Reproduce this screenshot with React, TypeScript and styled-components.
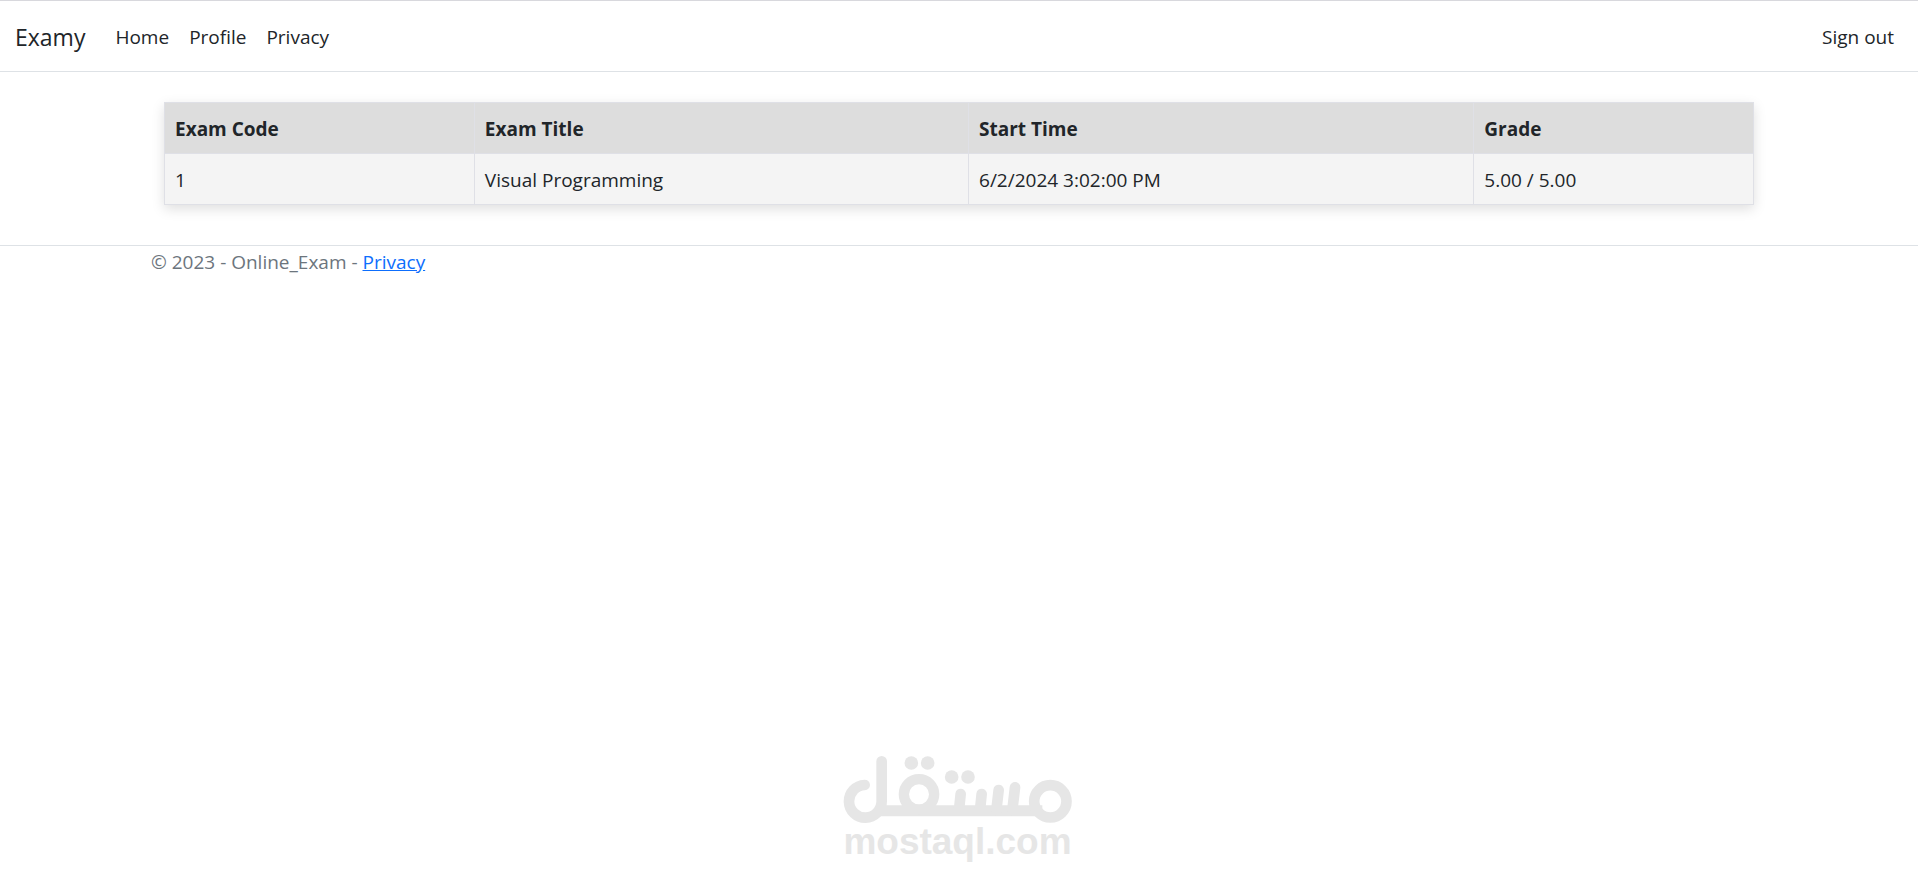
import React from "react";
import styled, { createGlobalStyle } from "styled-components";

const GlobalStyle = createGlobalStyle`
  *, *::before, *::after { box-sizing: border-box; }
  body {
    margin: 0;
    background: #fff;
    color: #212529;
    font-family: "Segoe UI", "Open Sans", "Noto Sans", sans-serif;
    font-size: 19px;
    line-height: 30px;
  }
`;

const Page = styled.div`
  display: flex;
  flex-direction: column;
  min-height: 100vh;
  border-top: 1px solid #d8d8dd;
`;

const Navbar = styled.nav`
  display: flex;
  align-items: center;
  height: 71px;
  padding: 2px 14px 0 15px;
  border-bottom: 1px solid #dee2e6;
`;

const Brand = styled.a`
  margin-right: 20px;
  color: #212529;
  font-size: 23px;
  text-decoration: none;
`;

const NavList = styled.ul<{ $end?: boolean }>`
  display: flex;
  margin: 0;
  margin-left: ${(p) => (p.$end ? "auto" : "0")};
  padding: 0;
  list-style: none;
`;

const NavLink = styled.a`
  display: block;
  padding: 10px;
  color: #212529;
  text-decoration: none;
`;

const Container = styled.div<{ $inset: number }>`
  width: 100%;
  max-width: 1650px;
  margin: 0 auto;
  padding: 0 ${(p) => p.$inset}px;
`;

const Main = styled.main`
  padding: 30px 0 40px;
`;

const ExamTable = styled.table`
  width: 100%;
  border-collapse: collapse;
  table-layout: fixed;
  background: #f4f4f4;
  box-shadow: 0 4px 12px rgba(0, 0, 0, 0.13);
`;

const Column = styled.col<{ $width: string }>`
  width: ${(p) => p.$width};
`;

const HeadCell = styled.th`
  padding: 11px 10px 9px;
  border: 1px solid #dfe0e6;
  background: #dddddd;
  font-weight: 700;
  text-align: left;
`;

const Cell = styled.td`
  padding: 11px 10px 9px;
  border: 1px solid #dfe0e6;
`;

const Footer = styled.footer`
  border-top: 1px solid #dee2e6;
  color: #6c757d;
  line-height: 32px;
`;

const FooterLink = styled.a`
  color: #0d6efd;
  text-decoration: underline;
`;

const Watermark = styled.div`
  display: flex;
  flex-direction: column;
  align-items: center;
  margin-top: auto;
  padding: 0 3px 17px 0;
  color: #e6e6e6;
`;

const WatermarkLogo = styled.svg`
  display: block;
  width: 229px;
  height: 67px;
`;

const WatermarkName = styled.span`
  font-family: "Liberation Sans", Arial, sans-serif;
  font-size: 37px;
  font-weight: 700;
  line-height: 38px;
`;

const columns = [
  { title: "Exam Code", width: "19.5%" },
  { title: "Exam Title", width: "31.1%" },
  { title: "Start Time", width: "31.8%" },
  { title: "Grade", width: "17.6%" },
];

const exams = [
  { code: "1", title: "Visual Programming", start: "6/2/2024 3:02:00 PM", grade: "5.00 / 5.00" },
];

export default function App() {
  return (
    <>
      <GlobalStyle />
      <Page>
        <header>
          <Navbar>
            <Brand href="#">Examy</Brand>
            <NavList>
              {["Home", "Profile", "Privacy"].map((label) => (
                <li key={label}>
                  <NavLink href="#">{label}</NavLink>
                </li>
              ))}
            </NavList>
            <NavList $end>
              <li>
                <NavLink href="#">Sign out</NavLink>
              </li>
            </NavList>
          </Navbar>
        </header>
        <Main>
          <Container $inset={30}>
            <ExamTable>
              <colgroup>
                {columns.map((c) => (
                  <Column key={c.title} $width={c.width} />
                ))}
              </colgroup>
              <thead>
                <tr>
                  {columns.map((c) => (
                    <HeadCell key={c.title} scope="col">{c.title}</HeadCell>
                  ))}
                </tr>
              </thead>
              <tbody>
                {exams.map((e) => (
                  <tr key={e.code}>
                    <Cell>{e.code}</Cell>
                    <Cell>{e.title}</Cell>
                    <Cell>{e.start}</Cell>
                    <Cell>{e.grade}</Cell>
                  </tr>
                ))}
              </tbody>
            </ExamTable>
          </Container>
        </Main>
        <Footer>
          <Container $inset={17}>
            © 2023 - Online_Exam - <FooterLink href="#">Privacy</FooterLink>
          </Container>
        </Footer>
        <Watermark>
          <WatermarkLogo viewBox="42 45 687 201" aria-hidden="true">
            <g fill="none" stroke="currentColor" strokeWidth="32" strokeLinecap="round">
              <path d="M107 132A49 49 0 1 0 158 181V61" />
              <path d="M150 209H640" strokeWidth="33" strokeLinecap="butt" />
              <circle cx="270" cy="160" r="45.5" strokeWidth="31" />
              <circle cx="664" cy="181" r="48.5" />
              <path d="M395 159L390 208M458 159L453 208M509 147L502 208M558 139L550 208" />
            </g>
            <g fill="currentColor">
              <circle cx="247" cy="66" r="20.5" />
              <circle cx="296" cy="66" r="20.5" />
              <circle cx="368" cy="108" r="20.5" />
              <circle cx="417" cy="108" r="20.5" />
            </g>
          </WatermarkLogo>
          <WatermarkName>mostaql.com</WatermarkName>
        </Watermark>
      </Page>
    </>
  );
}
